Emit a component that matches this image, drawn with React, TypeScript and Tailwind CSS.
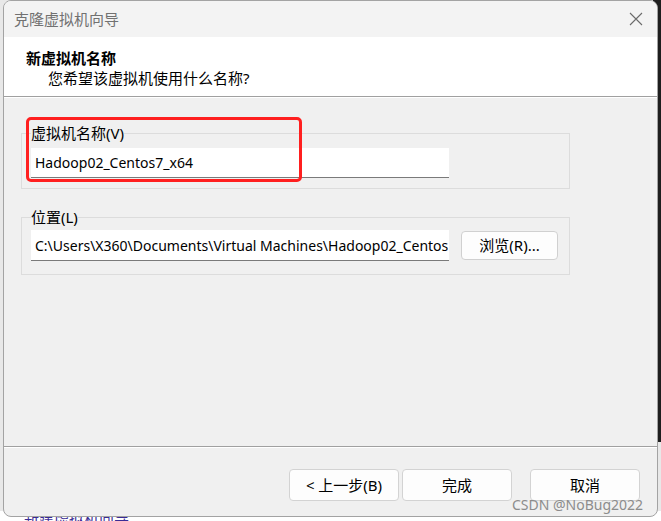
import React from 'react';

const cjk = { fontFamily: '"Noto Sans", "Noto Sans CJK SC", sans-serif' };

function CloseIcon() {
  return (
    <svg width="14" height="14" viewBox="0 0 14 14" fill="none">
      <path d="M1 1 L13 13 M13 1 L1 13" stroke="#6b6b6b" strokeWidth="1.1" />
    </svg>
  );
}

function FooterButton({ label }: { label: string }) {
  return (
    <button
      type="button"
      className="w-[110px] h-[32px] bg-[#fdfdfd] border border-[#d3d3d3] rounded-[4px] text-[15px] text-black flex items-center justify-center"
    >
      {label}
    </button>
  );
}

export default function App() {
  return (
    <div className="relative w-[661px] h-[521px] overflow-hidden bg-[#e8e8e8]" style={cjk}>
      {/* desktop behind the dialog */}
      <div className="absolute right-0 top-0 w-[8px] h-[442px] bg-[#1e1e1e]" />
      <div className="absolute left-0 bottom-0 w-[661px] h-[10px] bg-white" />
      <div className="absolute left-[24px] top-[508px] text-[15px] text-[#3a2c95] leading-[20px]">新建虚拟机向导</div>

      <div className="relative ml-[3px] w-[655px] h-[517px] rounded-[8px] border border-[#a3a3a3] overflow-hidden flex flex-col bg-[#f0f0f0]">
        {/* title bar */}
        <div className="h-[36px] bg-[#f3f3f3] flex items-center justify-between pl-[10px] pr-[14px]">
          <span className="text-[15px] text-[#717171]">克隆虚拟机向导</span>
          <CloseIcon />
        </div>

        {/* header */}
        <div className="h-[59px] bg-white pt-[11px]">
          <div className="pl-[22px] text-[15px] font-bold leading-[20px] text-black">新虚拟机名称</div>
          <div className="pl-[44px] text-[15px] leading-[20px] text-black">您希望该虚拟机使用什么名称?</div>
        </div>
        <div className="border-t border-[#a0a0a0] border-b border-b-white" />

        {/* body */}
        <div className="h-[348px] pl-[17px] pt-[25px]">
          <fieldset className="w-[549px] border border-[#dcdcdc] pl-[9px] pt-[5px] pb-[10px]">
            <legend className="text-[15px] leading-[20px] text-black">虚拟机名称(V)</legend>
            <div className="w-[418px] h-[30px] bg-white border-b border-[#7a7a7a] flex items-center pl-[4px] text-[14px] text-black whitespace-nowrap overflow-hidden">
              Hadoop02_Centos7_x64
            </div>
          </fieldset>

          <fieldset className="mt-[18px] w-[549px] border border-[#dcdcdc] pl-[9px] pt-[3px] pb-[13px]">
            <legend className="text-[15px] leading-[20px] text-black">位置(L)</legend>
            <div className="flex items-center">
              <div className="w-[418px] h-[31px] bg-white border-b border-[#7a7a7a] flex items-center pl-[4px] text-[14px] text-black whitespace-nowrap overflow-hidden">
                C:\Users\X360\Documents\Virtual Machines\Hadoop02_Centos
              </div>
              <button
                type="button"
                className="ml-[12px] w-[97px] h-[29px] bg-[#fdfdfd] border border-[#d0d0d0] rounded-[4px] text-[15px] text-black flex items-center justify-center"
              >
                浏览(R)...
              </button>
            </div>
          </fieldset>
        </div>
        <div className="border-t border-[#a0a0a0] border-b border-b-white" />

        {/* footer */}
        <div className="flex-1 flex justify-end items-start pt-[21px] pr-[17px]">
          <div className="flex gap-[3px]">
            <FooterButton label="< 上一步(B)" />
            <FooterButton label="完成" />
          </div>
          <div className="ml-[18px]">
            <FooterButton label="取消" />
          </div>
        </div>

        {/* annotation + watermark */}
        <div className="absolute left-[22px] top-[116px] w-[276px] h-[65px] border-[3px] border-[#ff1f1f] rounded-[5px]" />
        <div className="absolute left-[508px] top-[494px] text-[14px] leading-[20px] text-[#8c8c8c]">CSDN @NoBug2022</div>
      </div>
    </div>
  );
}
